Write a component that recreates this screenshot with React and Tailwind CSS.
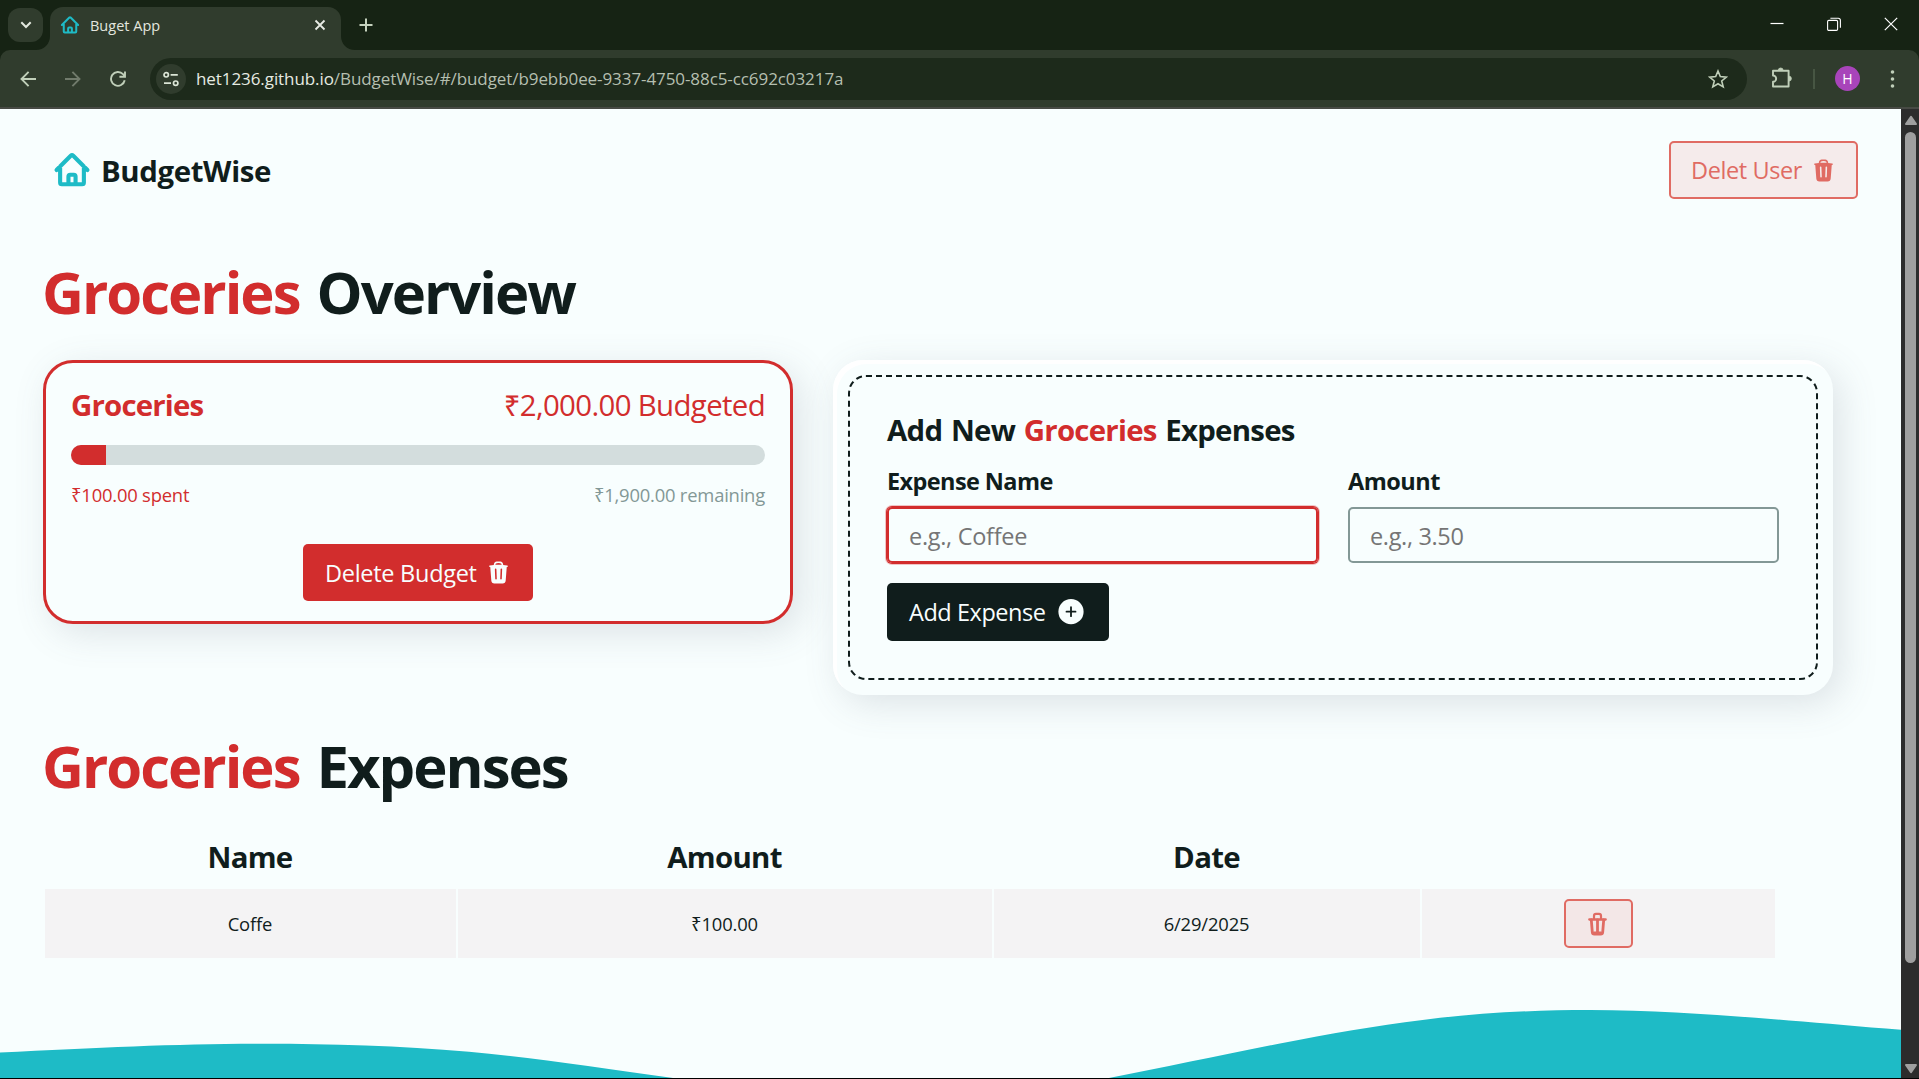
import React from "react";
import { HiTrash } from "react-icons/hi2";

function HomeIcon({ className, strokeWidth = 2.5 }) {
  return (
    <svg viewBox="0 0 24 24" fill="none" stroke="currentColor" strokeWidth={strokeWidth} strokeLinecap="round" strokeLinejoin="round" className={className}>
      <path d="m2.25 12 8.954-8.955c.44-.439 1.152-.439 1.591 0L21.75 12M4.5 9.75v10.125c0 .621.504 1.125 1.125 1.125H9.75v-4.875c0-.621.504-1.125 1.125-1.125h2.25c.621 0 1.125.504 1.125 1.125V21h4.125c.621 0 1.125-.504 1.125-1.125V9.75M8.25 21h8.25" />
    </svg>
  );
}

function TabStrip() {
  return (
    <div className="flex h-[50px] bg-[#162314] text-[#c5d2be]">
      <div className="ml-2 mt-2 flex h-[34px] w-[35px] items-center justify-center rounded-xl bg-[#303c2d]">
        <svg viewBox="0 0 12 8" fill="none" stroke="#e3e9df" strokeWidth="2" className="h-2 w-3"><path d="M1.3 1.3 6 6l4.7-4.7" /></svg>
      </div>
      <div className="relative ml-[7px] mt-[7px] flex h-[43px] w-[291px] rounded-t-[13px] bg-[#303c2d]">
        <svg viewBox="0 0 14 14" className="absolute -left-[14px] bottom-0 h-[14px] w-[14px]" fill="#303c2d"><path d="M14 0v14H0C8 14 14 8 14 0Z" /></svg>
        <svg viewBox="0 0 14 14" className="absolute -right-[14px] bottom-0 h-[14px] w-[14px]" fill="#303c2d"><path d="M0 0v14h14C6 14 0 8 0 0Z" /></svg>
        <HomeIcon className="ml-[10px] mt-[8px] h-5 w-5 text-[#1ebbc6]" strokeWidth={2.4} />
        <span className="ml-[10px] mt-[9px] text-[14.5px] leading-5 text-[#e3e6df]">Buget App</span>
        <svg viewBox="0 0 12 12" fill="none" stroke="#e8ece5" strokeWidth="1.8" className="ml-auto mr-[15px] mt-[12px] h-3 w-3"><path d="M1.5 1.5l9 9M10.5 1.5l-9 9" /></svg>
      </div>
      <svg viewBox="0 0 14 14" fill="none" stroke="currentColor" strokeWidth="2" className="ml-[18px] mt-[18px] h-[14px] w-[14px]"><path d="M7 .5v13M.5 7h13" /></svg>
      <div className="ml-auto mr-[21px] mt-[17px] flex h-[14px] gap-[43px] text-white">
        <svg viewBox="0 0 14 14" fill="none" stroke="currentColor" strokeWidth="1.2" className="h-[14px] w-[14px]"><path d="M.5 6.5h13" /></svg>
        <svg viewBox="0 0 14 14" fill="none" stroke="currentColor" strokeWidth="1.1" className="h-[14px] w-[14px]">
          <rect x=".6" y="3.4" width="10" height="10" rx="1.2" />
          <path d="M3.4 1.2h7.8c1.2 0 2.2 1 2.2 2.2v7.4" />
        </svg>
        <svg viewBox="0 0 14 14" fill="none" stroke="currentColor" strokeWidth="1.2" className="h-[14px] w-[14px]"><path d="M.8.8l12.4 12.4M13.2.8.8 13.2" /></svg>
      </div>
    </div>
  );
}

function Toolbar() {
  return (
    <div className="h-[59px] bg-[#162314]">
      <div className="flex h-[59px] items-center rounded-t-[10px] border-b-2 border-[#474a44] bg-[#303c2d] text-[#c0cfb9]">
        <svg viewBox="0 0 16 16" fill="none" stroke="currentColor" strokeWidth="1.9" className="ml-5 h-4 w-4"><path d="M16 8H1.8M8.6 .9 1.5 8l7.1 7.1" /></svg>
        <svg viewBox="0 0 16 16" fill="none" stroke="#717b6c" strokeWidth="1.9" className="ml-[29px] h-4 w-4"><path d="M0 8h14.2M7.4 .9 14.5 8l-7.1 7.1" /></svg>
        <svg viewBox="0 0 16 16" fill="none" stroke="currentColor" strokeWidth="1.9" className="ml-[29px] h-4 w-4"><path d="M14.7 9.3A6.9 6.9 0 1 1 13 3.2l1.6 1.7M15 .4v5.4H9.4" /></svg>
        <div className="ml-[24px] flex h-[42px] w-[1597px] items-center rounded-full bg-[#1d2a1b]">
          <div className="ml-1.5 flex h-[30px] w-[30px] items-center justify-center rounded-full bg-[#303c2d]">
            <svg viewBox="0 0 16 16" fill="none" stroke="#dbe5d6" strokeWidth="1.7" className="h-4 w-4">
              <circle cx="3.2" cy="3.8" r="2.2" /><path d="M7.6 3.8h7.2M1 12.2h7" /><circle cx="12.7" cy="12.2" r="2.2" />
            </svg>
          </div>
          <span className="ml-[10px] mt-px whitespace-nowrap text-[17px] leading-6 tracking-[-0.08px] text-[#b5bfb0]"><span className="text-[#e6ebe2]">het1236.github.io</span>/BudgetWise/#/budget/b9ebb0ee-9337-4750-88c5-cc692c03217a</span>
          <svg viewBox="0 0 20 20" fill="none" stroke="currentColor" strokeWidth="1.6" className="ml-auto mr-[19px] h-5 w-5"><path d="m10 2 2.3 5.6 6.1.5-4.7 3.9 1.5 5.9L10 14.7l-5.2 3.2L6.3 12 1.6 8.1l6.1-.5Z" /></svg>
        </div>
        <svg viewBox="0 0 22 22" fill="none" stroke="currentColor" strokeWidth="1.9" strokeLinejoin="round" className="ml-[24px] mb-px h-[22px] w-[22px]">
          <path d="M2 3.8h15.6v15.7H2v-4.7a3.1 3.1 0 0 0 0-6.3Z" />
          <path d="M7.3 3.4a2.4 2.4 0 0 1 4.8 0M18 9.2a2.4 2.4 0 0 1 0 4.8" fill="currentColor" strokeWidth=".8" />
        </svg>
        <div className="ml-[20px] h-5 w-[2px] bg-[#475643]" />
        <div className="ml-[20px] flex h-[25px] w-[25px] items-center justify-center rounded-full bg-[#a844ba] text-[14px] leading-none text-white">H</div>
        <svg viewBox="0 0 4 20" fill="currentColor" className="ml-[30px] h-5 w-[5px]"><circle cx="2" cy="3" r="1.8" /><circle cx="2" cy="10" r="1.8" /><circle cx="2" cy="17" r="1.8" /></svg>
      </div>
    </div>
  );
}

function Trash() {
  return <HiTrash className="h-[25px] w-[25px] shrink-0" />;
}

function Nav() {
  return (
    <nav className="flex h-[58px] items-center justify-between">
      <a className="flex items-center gap-[10px] pl-[10px]">
        <HomeIcon className="h-[38px] w-[38px] text-[#1ebbc6]" strokeWidth={2.6} />
        <span className="pt-[2px] text-[29.4px] font-bold leading-10 tracking-[-0.38px]">BudgetWise</span>
      </a>
      <button className="flex h-[58px] w-[189px] items-center justify-between rounded-[5px] border-2 border-[#e06b63] bg-[#f5ebeb] pl-5 pr-5 text-[23.5px] leading-8 tracking-[-0.4px] text-[#e06b63]">
        Delet User
        <Trash />
      </button>
    </nav>
  );
}

function BudgetCard() {
  return (
    <section className="flex h-[264px] w-[750px] flex-col rounded-[30px] border-[3px] border-[#d22d2d] px-[25px] pt-[22px] text-[#d22d2d] shadow-[8px_9px_36px_0_rgba(90,95,115,0.17)]">
      <div className="flex justify-between text-[29.4px] leading-10">
        <h3 className="font-bold tracking-[-0.8px]">Groceries</h3>
        <p className="tracking-[-0.65px]">₹2,000.00 Budgeted</p>
      </div>
      <div className="mt-[20px] h-5 overflow-hidden rounded-full bg-[#d3dddd]">
        <div className="h-full w-[5%] bg-[#d22d2d]" />
      </div>
      <div className="mt-4 flex justify-between text-[18.4px] leading-7 tracking-[-0.2px]">
        <span>₹100.00 spent</span>
        <span className="text-[#839896]">₹1,900.00 remaining</span>
      </div>
      <button className="mt-[35px] flex h-[57px] w-[230px] items-center justify-between self-center rounded-[5px] bg-[#d22d2d] pl-[22px] pr-[22px] text-[23.5px] leading-8 tracking-[-0.28px] text-[#f8fefe]">
        Delete Budget
        <Trash />
      </button>
    </section>
  );
}

function ExpenseForm() {
  return (
    <section className="h-[335px] w-[1000px] rounded-[30px] bg-[#f8fefe] p-[15px] shadow-[8px_9px_36px_0_rgba(90,95,115,0.17),inset_4px_4px_0_0_#ffffff]">
      <div className="h-full rounded-[18px] border-2 border-dashed border-[#101d1c] px-[37px] pt-[33px]">
        <h2 className="text-[29.4px] font-bold leading-10 tracking-[-0.75px] [word-spacing:1.8px]">Add New <span className="text-[#d22d2d]">Groceries</span> Expenses</h2>
        <div className="mt-[15px] grid grid-cols-2 gap-x-[30px]">
          <label className="flex flex-col gap-[10px]">
            <span className="text-[23.5px] font-bold leading-8 tracking-[-0.6px]">Expense Name</span>
            <input placeholder="e.g., Coffee" className="h-14 w-full rounded-[5px] border-2 border-[#d22d2d] px-5 pt-[2px] text-[23.5px] tracking-[-0.3px] shadow-[0_0_0_1px_#d22d2d,0_0_0_2px_#f0c4c4] outline-none placeholder:text-[#757575]" />
          </label>
          <label className="flex flex-col gap-[10px]">
            <span className="text-[23.5px] font-bold leading-8 tracking-[-0.5px]">Amount</span>
            <input placeholder="e.g., 3.50" className="h-14 w-full rounded-[5px] border-2 border-[#839896] px-5 pt-[2px] text-[23.5px] tracking-[-0.35px] outline-none placeholder:text-[#757575]" />
          </label>
        </div>
        <button className="mt-5 flex h-[58px] w-[222px] items-center justify-between rounded-[5px] bg-[#101d1c] pl-[22px] pr-[25px] text-[23.5px] leading-8 tracking-[-0.45px] text-[#f8fefe]">
          Add Expense
          <svg viewBox="0 0 26 26" className="h-[26px] w-[26px]"><circle cx="13" cy="12.700" r="12.6" fill="#f8fefe" /><path d="M13 8.2v9M8.5 12.7h9" stroke="#101d1c" strokeWidth="1.8" strokeLinecap="round" /></svg>
        </button>
      </div>
    </section>
  );
}

function ExpenseTable() {
  return (
    <div className="mt-[42px] grid w-[1730px] grid-cols-[411px_534px_426px_353px] gap-x-[2px] text-center">
      {["Name", "Amount", "Date", ""].map((h, i) => (
        <div key={i} className="mb-[12px] h-10 text-[29.4px] font-bold leading-10 tracking-[-0.7px]">{h}</div>
      ))}
      {["Coffe", "₹100.00", "6/29/2025"].map((c) => (
        <div key={c} className="h-[69px] bg-[#f4f3f4] text-[18.4px] leading-[70px] tracking-[-0.15px]">{c}</div>
      ))}
      <div className="flex h-[69px] items-center justify-center bg-[#f4f3f4]">
        <button className="flex h-[49px] w-[69px] items-center justify-center rounded-[5px] border-2 border-[#e06b63] bg-[#f3e7e7] text-[#e06b63]">
          <svg viewBox="0 0 19 24" fill="none" stroke="currentColor" strokeLinejoin="round" strokeLinecap="round" className="mr-px h-6 w-[19px]">
            <path d="M6 6.800V4C6 2.800 6.800 1.900 8 1.900h3c1.200 0 2 .9 2 2.100v2.800" strokeWidth="2.200" />
            <path d="M1.300 7.500h16.400" strokeWidth="2.300" />
            <path d="M3.300 8 4.300 20.200c.1 1.200.9 1.900 2 1.900h6.400c1.100 0 1.900-.7 2-1.900L15.700 8" strokeWidth="2.800" />
            <path d="M9.500 8v13" strokeWidth="2.800" />
            <path d="M6 21h7" strokeWidth="3" />
          </svg>
        </button>
      </div>
    </div>
  );
}

function Wave() {
  return (
    <svg viewBox="0 0 1901 78" preserveAspectRatio="none" fill="#1ebbc6" className="absolute bottom-0 left-0 h-[78px] w-[1901px]">
      <path d="M0 52.5C100 47.5 180 43.7 265 43.7 330 43.7 400 45.5 469 51.7 530 57.2 600 68 673 78H0Z" />
      <path d="M1109 78C1165 67 1220 55.5 1280 43.5 1330 33.5 1375 26 1422.6 19.9 1480 12.6 1535 10 1590 10 1660 10 1725 15.5 1789 20.4 1826 23.3 1860 26.5 1901 29.7V78Z" />
    </svg>
  );
}

function Scrollbar() {
  return (
    <div className="flex w-[18px] flex-col items-center bg-[#2c2c2c] pl-px pt-[6px]">
      <svg viewBox="0 0 14 11" fill="#9f9f9f" stroke="#9f9f9f" strokeWidth="2" strokeLinejoin="round" className="h-[11px] w-[14px]"><path d="M7 1.8 12 9H2Z" /></svg>
      <div className="mt-[6px] h-[831px] w-[11px] rounded-full bg-[#9f9f9f]" />
      <svg viewBox="0 0 14 11" fill="#9f9f9f" stroke="#9f9f9f" strokeWidth="2" strokeLinejoin="round" className="mb-1 mt-auto h-[11px] w-[14px]"><path d="M7 9.2 12 2H2Z" /></svg>
    </div>
  );
}

function PageTitle({ className, accent, rest }) {
  return (
    <h1 className={"-ml-px text-[58px] font-bold leading-[60px] tracking-[-2px] [word-spacing:4px] " + className}>
      <span className="text-[#d22d2d]">{accent}</span> {rest}
    </h1>
  );
}

export default function App() {
  return (
    <div className="flex h-[1079px] w-[1919px] flex-col overflow-hidden border-b border-black font-['Open_Sans','Noto_Sans',sans-serif]">
      <TabStrip />
      <Toolbar />
      <div className="flex flex-1">
        <main className="relative w-[1901px] bg-[#f8fefe] px-[43px] pt-8 text-[#101d1c]">
          <Nav />
          <PageTitle className="mt-[63px]" accent="Groceries" rest="Overview" />
          <div className="mt-[38px] flex items-start gap-10">
            <BudgetCard />
            <ExpenseForm />
          </div>
          <PageTitle className="mt-[41px]" accent="Groceries" rest="Expenses" />
          <div className="-mt-px pl-[1.5px]"><ExpenseTable /></div>
          <Wave />
        </main>
        <Scrollbar />
      </div>
    </div>
  );
}
